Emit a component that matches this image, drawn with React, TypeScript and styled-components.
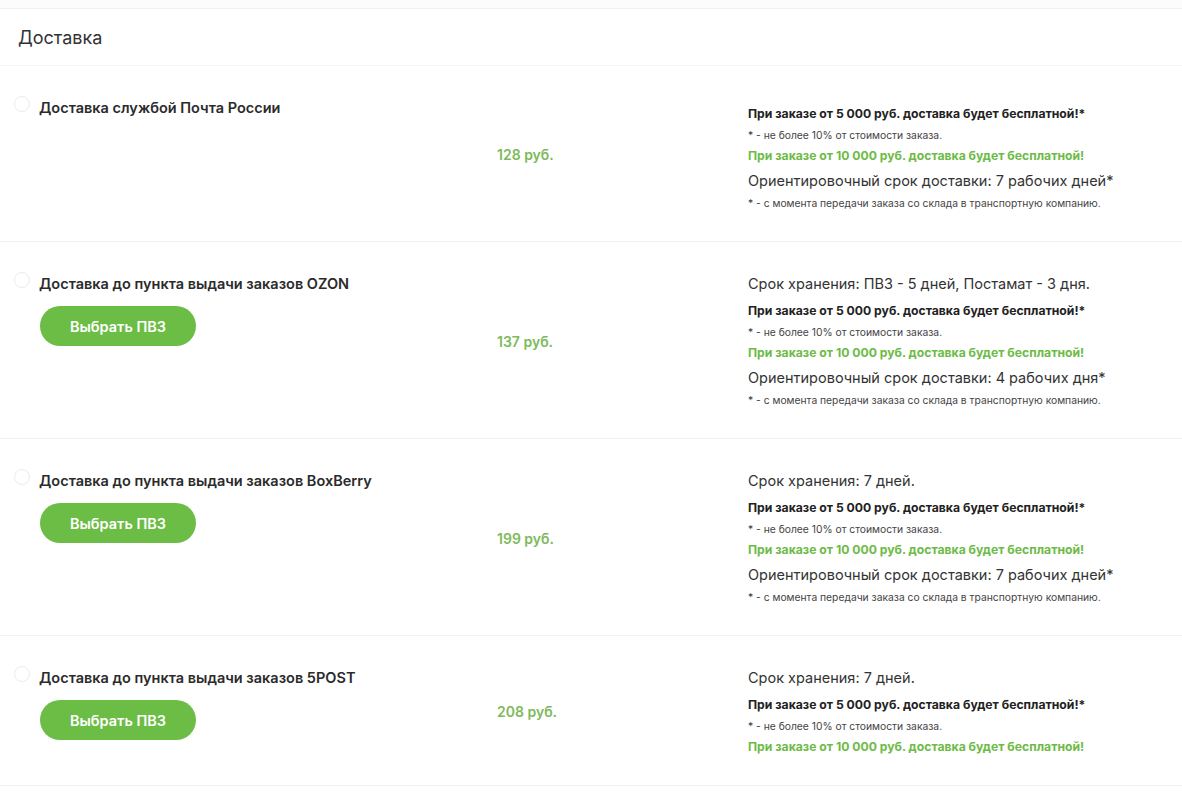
import React from "react";
import styled, { createGlobalStyle } from "styled-components";

const Global = createGlobalStyle`
  html, body { margin: 0; padding: 0; background: #ffffff; }
  body { font-family: Inter, "Noto Sans", sans-serif; color: #2b2b2b; }
  * { box-sizing: border-box; }
`;

const Page = styled.div`
  width: 1182px;
  background: #ffffff;
`;

const TopStrip = styled.div`
  height: 9px;
  background: #fcfcfc;
  border-bottom: 1px solid #f0f0f0;
`;

const Heading = styled.h2`
  margin: 0;
  height: 57px;
  padding: 0 18px;
  display: flex;
  align-items: center;
  font-size: 18px;
  font-weight: 400;
  color: #333;
  border-bottom: 1px solid #f4f4f4;
`;

const Row = styled.div`
  display: grid;
  grid-template-columns: 483px 251px 1fr;
  align-items: start;
  padding: 32px 0 26px 14px;
  border-bottom: 1px solid #f2f2f2;
`;

const Left = styled.div`
  display: flex;
  flex-direction: column;
  gap: 12px;
`;

const TitleLine = styled.label`
  display: flex;
  align-items: center;
  gap: 9px;
  font-size: 14.5px;
  font-weight: 600;
  color: #2b2b2b;
  line-height: 20px;
`;

const Radio = styled.span`
  width: 16px;
  height: 16px;
  border-radius: 50%;
  border: 1px solid #ececec;
  background: #fff;
  flex: none;
  margin-top: -8px;
`;

const PickButton = styled.button`
  margin-left: 26px;
  width: 156px;
  height: 40px;
  border: none;
  border-radius: 20px;
  background: #6cbd45;
  color: #ffffff;
  font-family: inherit;
  font-size: 14.5px;
  font-weight: 600;
  cursor: pointer;
`;

const Price = styled.div`
  align-self: center;
  margin-bottom: 4px;
  font-size: 14px;
  font-weight: 600;
  color: #7dba5b;
`;

const Info = styled.div<{ $offset?: number }>`
  display: flex;
  flex-direction: column;
  margin-top: ${(p) => p.$offset ?? 0}px;
`;

const Plain = styled.div<{ $gapAbove?: number; $gapBelow?: number }>`
  font-size: 14.5px;
  line-height: 20px;
  color: #333;
  margin-top: ${(p) => p.$gapAbove ?? 0}px;
  margin-bottom: ${(p) => p.$gapBelow ?? 3}px;
`;

const Strong = styled.div<{ $green?: boolean }>`
  font-size: 12.2px;
  font-weight: 700;
  line-height: 18px;
  color: ${(p) => (p.$green ? "#6dbb47" : "#222")};
  margin-bottom: 3px;
`;

const Note = styled.div`
  font-size: 10.3px;
  line-height: 18px;
  color: #444;
  margin-bottom: 3px;
`;

type Item = {
  title: string;
  price: string;
  button?: boolean;
  storage?: string;
  term?: string;
  offset?: number;
};

const items: Item[] = [
  {
    title: "Доставка службой Почта России",
    price: "128 руб.",
    term: "Ориентировочный срок доставки: 7 рабочих дней*",
    offset: 7,
  },
  {
    title: "Доставка до пункта выдачи заказов OZON",
    price: "137 руб.",
    button: true,
    storage: "Срок хранения: ПВЗ - 5 дней, Постамат - 3 дня.",
    term: "Ориентировочный срок доставки: 4 рабочих дня*",
  },
  {
    title: "Доставка до пункта выдачи заказов BoxBerry",
    price: "199 руб.",
    button: true,
    storage: "Срок хранения: 7 дней.",
    term: "Ориентировочный срок доставки: 7 рабочих дней*",
  },
  {
    title: "Доставка до пункта выдачи заказов 5POST",
    price: "208 руб.",
    button: true,
    storage: "Срок хранения: 7 дней.",
  },
];

export default function App() {
  return (
    <Page>
      <Global />
      <TopStrip />
      <Heading>Доставка</Heading>
      {items.map((it) => (
        <Row key={it.title}>
          <Left>
            <TitleLine>
              <Radio />
              {it.title}
            </TitleLine>
            {it.button && <PickButton>Выбрать ПВЗ</PickButton>}
          </Left>
          <Price>{it.price}</Price>
          <Info $offset={it.offset}>
            {it.storage && <Plain $gapBelow={8}>{it.storage}</Plain>}
            <Strong>При заказе от 5 000 руб. доставка будет бесплатной!*</Strong>
            <Note>* - не более 10% от стоимости заказа.</Note>
            <Strong $green>При заказе от 10 000 руб. доставка будет бесплатной!</Strong>
            {it.term && <Plain $gapAbove={3}>{it.term}</Plain>}
            {it.term && <Note>* - с момента передачи заказа со склада в транспортную компанию.</Note>}
          </Info>
        </Row>
      ))}
    </Page>
  );
}
